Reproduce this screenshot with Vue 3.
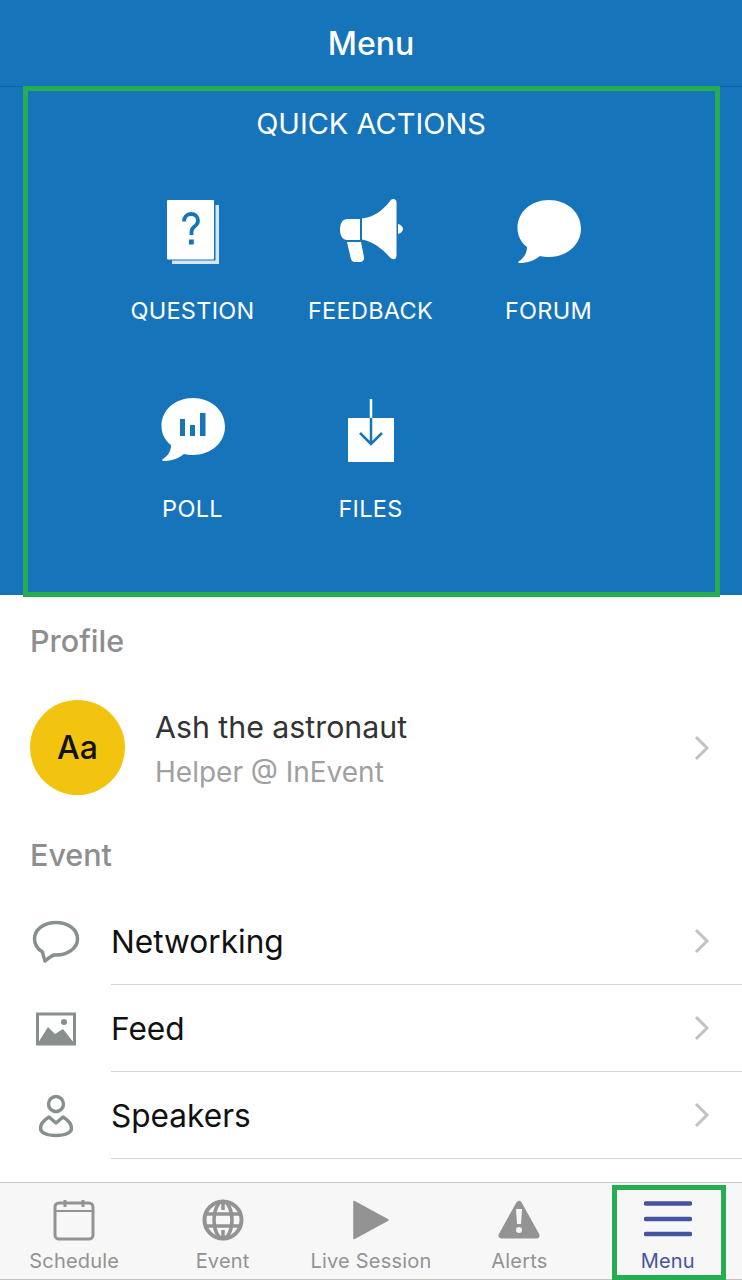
<template>
  <div class="screen">
    <section class="hero">
      <header class="topbar">Menu</header>
      <h2 class="quick-title">QUICK ACTIONS</h2>
      <div class="quick-grid">
        <div v-for="item in quickActions" :key="item.label" class="quick-item">
          <div class="quick-icon">
            <svg v-if="item.icon === 'question'" width="56" height="66" viewBox="0 0 56 66">
              <path d="M50.500 6H54v59H7v-3.500h43.500z" fill="#d5e6f5" />
              <rect x="2" y="1" width="47" height="59.500" rx="1" fill="#fff" />
              <path d="M19 22.500c0-4.500 3-7.500 7-7.500 4.200 0 7 2.800 7 6.500 0 3-1.500 4.500-3.500 6-2 1.600-3 3-3 5.500v3" fill="none" stroke="#1674bb" stroke-width="3.800" />
              <rect x="24" y="40.500" width="4.800" height="5" fill="#1674bb" />
            </svg>
            <svg v-else-if="item.icon === 'feedback'" width="66" height="66" viewBox="0 0 66 66">
              <path d="M22 20H9c-4 0-7 4-7 10.500C2 37 5 41 9 41h13z" fill="#fff" />
              <path d="M24 19.500c11-1 21-8 28-17.500 1.500-2.500 6-3 6.500 1v54c-.5 4-4 4-6.500 1.500-7-8-16-15.500-28-18z" fill="#fff" />
              <path d="M60 25c3 .5 5 3 5 5s-2 4.500-5 5z" fill="#fff" />
              <path d="M9 43h14l3 15c.5 3-1 5-4 5h-5c-2.500 0-3.800-1.500-4.300-4z" fill="#fff" />
            </svg>
            <svg v-else-if="item.icon === 'forum'" width="66" height="66" viewBox="0 0 66 66">
              <path d="M33 1C15 1 1.500 13 1.500 29c0 8 3.500 14.500 9.500 19 0 6-3 11-8.500 14.500-.8.8-.3 1.500 1 1.500 8 0 15-2.500 20.500-7 3 .8 6 1 9 1 17.500 0 32-12 32-28.500C65 13 50.500 1 33 1z" fill="#fff" />
            </svg>
            <svg v-else-if="item.icon === 'poll'" width="66" height="66" viewBox="0 0 66 66">
              <path d="M33 1C15 1 1.500 13 1.500 29c0 8 3.500 14.500 9.500 19 0 6-3 11-8.500 14.500-.8.8-.3 1.500 1 1.500 8 0 15-2.500 20.500-7 3 .8 6 1 9 1 17.500 0 32-12 32-28.500C65 13 50.500 1 33 1z" fill="#fff" />
              <rect x="20" y="22" width="5" height="17" fill="#1674bb" />
              <rect x="30" y="28" width="5" height="11" fill="#1674bb" />
              <rect x="40" y="16" width="5.500" height="23" fill="#1674bb" />
            </svg>
            <svg v-else width="66" height="66" viewBox="0 0 66 66">
              <rect x="10" y="21" width="46" height="44" fill="#fff" />
              <path d="M33 21v26M22 36l11 11 11-11" fill="none" stroke="#1674bb" stroke-width="2.500" />
              <path d="M33 2v19" fill="none" stroke="#fff" stroke-width="2.500" />
            </svg>
          </div>
          <div class="quick-label">{{ item.label }}</div>
        </div>
      </div>
    </section>

    <div class="section-label">Profile</div>
    <div class="profile-row">
      <div class="avatar">Aa</div>
      <div class="profile-text">
        <div class="profile-name">Ash the astronaut</div>
        <div class="profile-role">Helper @ InEvent</div>
      </div>
      <svg class="chevron" width="16" height="26" viewBox="0 0 16 26">
        <path d="M2 2l11 11L2 24" fill="none" stroke="#c0c2c4" stroke-width="3" />
      </svg>
    </div>

    <div class="section-label event-label">Event</div>
    <div class="menu-list">
      <div v-for="row in menuRows" :key="row.label" class="menu-row">
        <div class="menu-icon">
          <svg v-if="row.icon === 'chat'" width="48" height="44" viewBox="0 0 48 44">
            <path d="M24 2.500C12 2.500 2.500 9.500 2.500 19c0 5.500 3 10 8 13 .5 2.500 1.500 6 2.500 9 3-2.500 6-5 9-6h2c12 0 21.500-7 21.500-16C45.500 9.500 36 2.500 24 2.500z" fill="none" stroke="#87908f" stroke-width="3.500" stroke-linejoin="round" />
          </svg>
          <svg v-else-if="row.icon === 'image'" width="42" height="34" viewBox="0 0 42 34">
            <rect x="2.500" y="2" width="37" height="30" fill="none" stroke="#87908f" stroke-width="3" />
            <circle cx="29" cy="10" r="3" fill="#87908f" />
            <path d="M3 31l10-16 7 7 8-5 11 14z" fill="#87908f" />
          </svg>
          <svg v-else width="36" height="46" viewBox="0 0 36 46">
            <circle cx="18" cy="11" r="7.500" fill="none" stroke="#87908f" stroke-width="3.400" />
            <path d="M11 24C6 27 2.500 31 2.500 35.500c0 4 6 7 15.500 7s15.500-3 15.500-7c0-4.500-3.500-8.500-8.500-11.500l-7 6z" fill="none" stroke="#87908f" stroke-width="3.400" stroke-linejoin="round" />
          </svg>
        </div>
        <div class="menu-body">
          <span>{{ row.label }}</span>
          <svg class="chevron" width="16" height="26" viewBox="0 0 16 26">
            <path d="M2 2l11 11L2 24" fill="none" stroke="#c0c2c4" stroke-width="3" />
          </svg>
        </div>
      </div>
    </div>

    <nav class="tabbar">
      <div v-for="tab in tabs" :key="tab.label" class="tab" :class="{ active: tab.icon === 'menu' }">
        <div class="tab-icon">
          <svg v-if="tab.icon === 'calendar'" width="42" height="42" viewBox="0 0 42 42">
            <rect x="2" y="4" width="38" height="36" rx="4" fill="none" stroke="#939393" stroke-width="3" />
            <path d="M2 12h38" stroke="#939393" stroke-width="2" />
            <path d="M12 1v7M30 1v7" stroke="#939393" stroke-width="3" />
          </svg>
          <svg v-else-if="tab.icon === 'globe'" width="42" height="42" viewBox="0 0 42 42">
            <circle cx="21" cy="21" r="18.500" fill="none" stroke="#939393" stroke-width="4" />
            <ellipse cx="21" cy="21" rx="9" ry="18.500" fill="none" stroke="#939393" stroke-width="3.500" />
            <path d="M3 15h36M3 27h36M21 2v9M21 31v9" stroke="#939393" stroke-width="3.500" />
          </svg>
          <svg v-else-if="tab.icon === 'play'" width="36" height="40" viewBox="0 0 36 40">
            <path d="M1 1.500l34 18.500L1 38.500z" fill="#939393" stroke="#939393" stroke-width="1.500" stroke-linejoin="round" />
          </svg>
          <svg v-else-if="tab.icon === 'alert'" width="42" height="40" viewBox="0 0 42 40">
            <path d="M21 4L3.500 35.500h35z" fill="#939393" stroke="#939393" stroke-width="6" stroke-linejoin="round" />
            <path d="M18 9h6l-1 15h-4z" fill="#f7f7f7" />
            <circle cx="21" cy="30" r="3" fill="#f7f7f7" />
          </svg>
          <svg v-else width="48" height="40" viewBox="0 0 48 40">
            <path d="M2 3.500h44M2 19h44M2 34h44" stroke="#45549f" stroke-width="4.500" stroke-linecap="round" />
          </svg>
        </div>
        <div class="tab-label">{{ tab.label }}</div>
      </div>
    </nav>

    <div class="mark mark-quick"></div>
    <div class="mark mark-tab"></div>
  </div>
</template>

<script setup>
const quickActions = [
  { label: 'QUESTION', icon: 'question' },
  { label: 'FEEDBACK', icon: 'feedback' },
  { label: 'FORUM', icon: 'forum' },
  { label: 'POLL', icon: 'poll' },
  { label: 'FILES', icon: 'files' }
]

const menuRows = [
  { label: 'Networking', icon: 'chat' },
  { label: 'Feed', icon: 'image' },
  { label: 'Speakers', icon: 'person' }
]

const tabs = [
  { label: 'Schedule', icon: 'calendar' },
  { label: 'Event', icon: 'globe' },
  { label: 'Live Session', icon: 'play' },
  { label: 'Alerts', icon: 'alert' },
  { label: 'Menu', icon: 'menu' }
]
</script>

<style>
html,
body {
  margin: 0;
  background: #fff;
}
</style>

<style scoped>
.screen {
  position: relative;
  width: 742px;
  height: 1280px;
  overflow: hidden;
  background: #fff;
  font-family: Inter, 'Liberation Sans', sans-serif;
  display: flex;
  flex-direction: column;
}

.hero {
  height: 595px;
  background: #1674bb;
  color: #fff;
  flex: none;
}

.topbar {
  height: 86px;
  border-bottom: 1px solid #0f65a8;
  text-align: center;
  font-size: 32px;
  font-weight: 500;
  line-height: 88px;
}

.quick-title {
  margin: 19px 0 0;
  text-align: center;
  font-size: 29px;
  font-weight: 400;
  line-height: 36px;
}

.quick-grid {
  display: grid;
  grid-template-columns: repeat(3, 178px);
  grid-auto-rows: 198px;
  justify-content: center;
  margin: 56px 0 0 -1px;
}

.quick-item {
  display: flex;
  flex-direction: column;
  align-items: center;
}

.quick-icon {
  height: 68px;
  display: flex;
  align-items: center;
  justify-content: center;
}

.quick-label {
  margin-top: 31px;
  font-size: 23.500px;
  line-height: 28px;
  letter-spacing: 0.3px;
}

.section-label {
  margin: 28px 0 0 30px;
  font-size: 30.500px;
  font-weight: 500;
  line-height: 36px;
  color: #8e8e8e;
}

.event-label {
  margin-top: 42px;
}

.profile-row {
  display: flex;
  align-items: center;
  margin-top: 41px;
  padding: 0 32px 0 30px;
}

.avatar {
  width: 95px;
  height: 95px;
  border-radius: 50%;
  background: #f2c40f;
  color: #111;
  font-size: 32px;
  font-weight: 500;
  display: flex;
  align-items: center;
  justify-content: center;
  flex: none;
}

.profile-text {
  margin: 2px 0 0 30px;
  flex: 1;
}

.profile-name {
  font-size: 30.300px;
  line-height: 40px;
  color: #333;
}

.profile-role {
  margin-top: 7px;
  font-size: 28px;
  line-height: 36px;
  color: #a0a0a0;
}

.chevron {
  flex: none;
}

.menu-list {
  margin-top: 25px;
}

.menu-row {
  display: flex;
  height: 87px;
}

.menu-icon {
  width: 111px;
  padding-left: 1px;
  box-sizing: border-box;
  display: flex;
  align-items: center;
  justify-content: center;
  flex: none;
}

.menu-body {
  flex: 1;
  display: flex;
  align-items: center;
  justify-content: space-between;
  padding-right: 32px;
  border-bottom: 1px solid #d4d4d4;
  font-size: 31.600px;
  color: #111;
}

.tabbar {
  position: absolute;
  left: 0;
  right: 0;
  bottom: 0;
  height: 98px;
  box-sizing: border-box;
  border-top: 1px solid #c4c4c4;
  border-bottom: 1px solid #c4c4c4;
  background: #f7f7f7;
  display: grid;
  grid-template-columns: repeat(5, 1fr);
}

.tab {
  display: flex;
  flex-direction: column;
  align-items: center;
  color: #939393;
}

.tab-icon {
  height: 42px;
  margin-top: 16px;
  display: flex;
  align-items: center;
  justify-content: center;
}

.tab-label {
  margin-top: 7px;
  font-size: 20px;
  line-height: 26px;
  letter-spacing: 0.2px;
}

.tab.active {
  color: #45549f;
}

.mark {
  position: absolute;
  box-sizing: border-box;
  border: 5px solid #27ad51;
  pointer-events: none;
}

.mark-quick {
  left: 23px;
  top: 86px;
  width: 697px;
  height: 511px;
}

.mark-tab {
  left: 612px;
  top: 1185px;
  width: 114px;
  height: 95px;
}
</style>
